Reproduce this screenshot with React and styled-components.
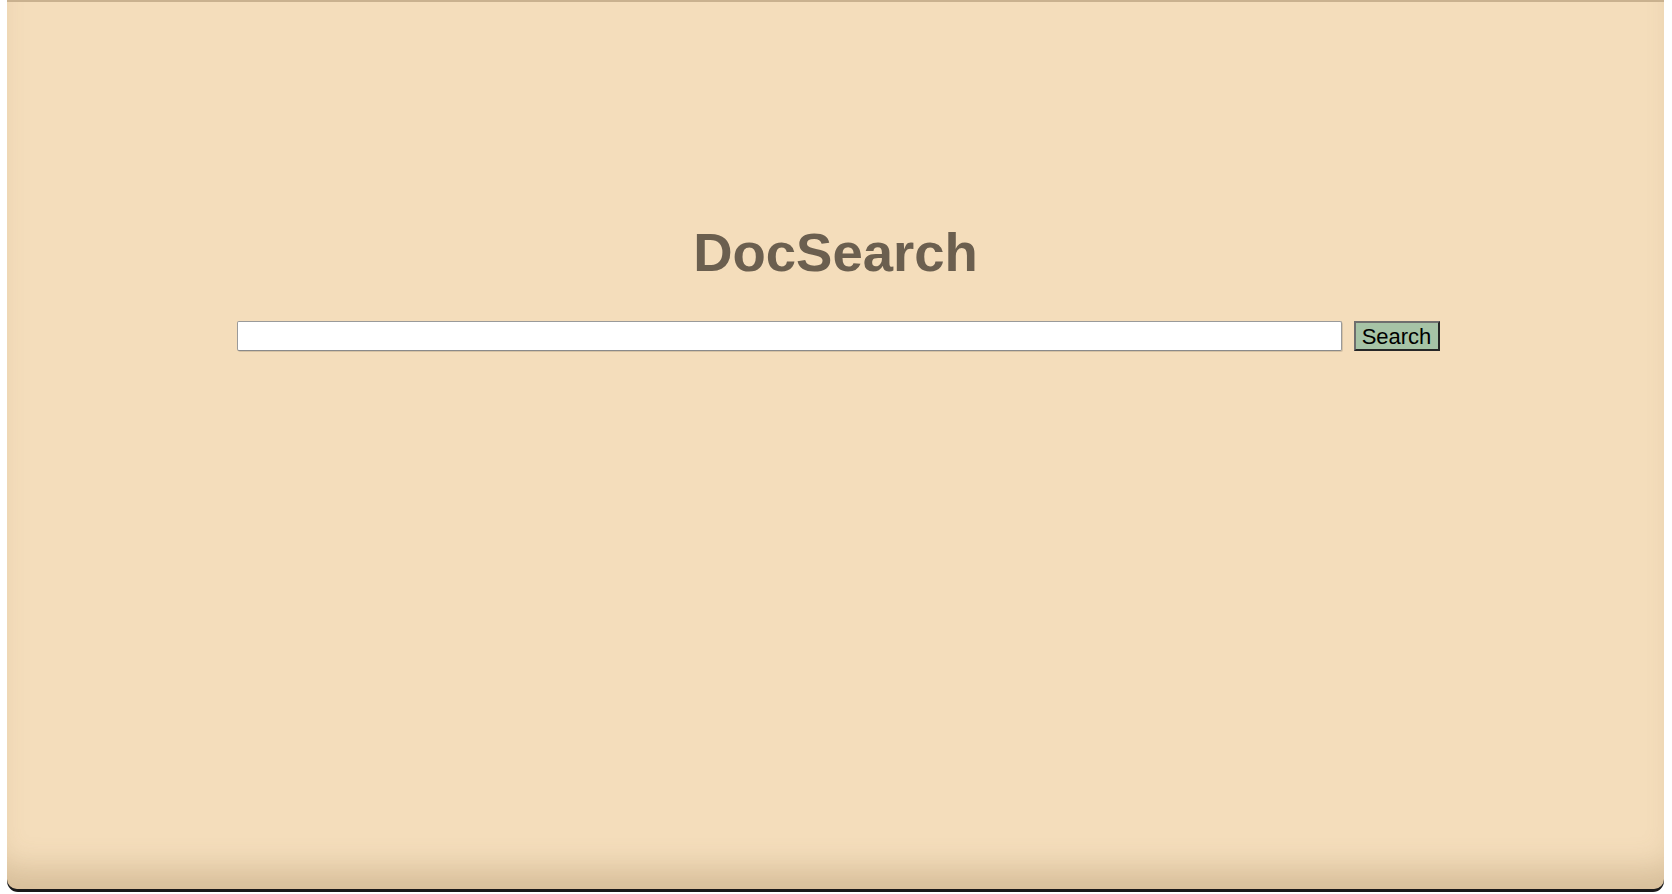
import styled, { createGlobalStyle } from "styled-components";

const GlobalStyle = createGlobalStyle`
    html, body {
        margin: 0;
        padding: 0;
        background: #ffffff;
        font-family: "Liberation Sans", Arial, sans-serif;
    }
`

const App = () => {
    return (
        <>
            <GlobalStyle />
            <StyledWindow>
                <StyledPage>
                    <StyledTitle>DocSearch</StyledTitle>
                    <StyledForm onSubmit={(e) => e.preventDefault()}>
                        <StyledInput type="text" />
                        <StyledButton type="submit">Search</StyledButton>
                    </StyledForm>
                </StyledPage>
            </StyledWindow>
        </>
    )
}

const StyledWindow = styled.div`
    margin: 0 8px 0 7px;
    height: 892px;
    background: #1a1a1a;
    border-radius: 0 0 11px 11px;
    padding-bottom: 3px;
    box-sizing: border-box;
`
const StyledPage = styled.div`
    height: 100%;
    box-sizing: border-box;
    background: #f4ddbb;
    border-top: 2px solid #c9b18f;
    border-radius: 0 0 10px 10px;
    box-shadow: inset 0 -34px 30px -14px rgba(140, 110, 70, 0.28);
    display: flex;
    flex-direction: column;
    align-items: center;
    padding-top: 220px;
`
const StyledTitle = styled.h1`
    margin: 0 0 37px 0;
    font-size: 54.5px;
    line-height: 62px;
    font-weight: bold;
    color: #6b5f4f;
`
const StyledForm = styled.form`
    display: flex;
    flex-direction: row;
    align-items: center;
    gap: 12px;
    margin-left: 5px;
`
const StyledInput = styled.input`
    width: 1105px;
    height: 30px;
    box-sizing: border-box;
    border: 1px solid #9a9a9a;
    border-bottom-color: #8a8a8a;
    border-radius: 2px;
    background: #ffffff;
    padding: 0 6px;
    font-size: 18px;
    font-family: "Liberation Sans", Arial, sans-serif;
    box-shadow: 1px 1px 0 rgba(0, 0, 0, 0.12);
    outline: none;
`
const StyledButton = styled.button`
    width: 86px;
    height: 30px;
    box-sizing: border-box;
    padding: 2px 0 0 0;
    background: #a6c3a6;
    border: 2px solid;
    border-color: #6e6e6e #262626 #262626 #6e6e6e;
    color: #000000;
    font-size: 22px;
    font-family: "Liberation Sans", Arial, sans-serif;
    line-height: 24px;
    cursor: pointer;
`

export default App;
